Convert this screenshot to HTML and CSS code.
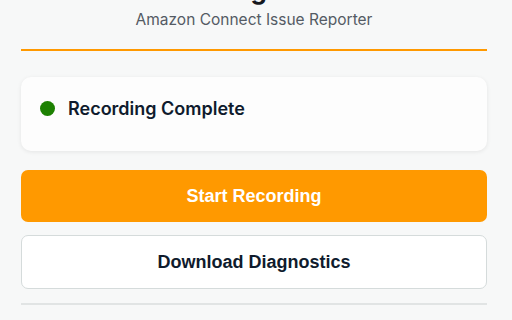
FILE: index.html
```html
<!DOCTYPE html>
<html lang="en">
  <head>
    <meta charset="UTF-8" />
    <meta name="viewport" content="width=device-width, initial-scale=1.0" />
    <title>CCP Diagnostics</title>
    <link rel="stylesheet" href="styles.css">
  </head>
  <body>
    <header>
      <h1>CCP Diagnostics</h1>
      <div class="subtitle">Amazon Connect Issue Reporter</div>
    </header>

    <main>
      <div class="status-card">
        <div class="status">
          <span class="status-dot"></span>
          <span class="status-text">Recording Complete</span>
        </div>
      </div>

      <button class="btn btn-primary">Start Recording</button>
      <button class="btn btn-secondary">Download Diagnostics</button>

      <div class="divider"></div>
    </main>
  </body>
</html>
```

FILE: styles.css
```css
* {
  margin: 0;
  padding: 0;
  box-sizing: border-box;
}
body {
  background-color: #f7f8f8;
  color: #0f1b2d;
  font-family: Inter, "Noto Sans", sans-serif;
  padding: 0 25px 0 21px;
}
header {
  text-align: center;
  margin-top: -25px;
  padding-bottom: 19px;
  border-bottom: 2px solid #ff9900;
}
h1 {
  font-size: 26px;
  line-height: 30px;
  font-weight: 700;
  color: #16191f;
}
.subtitle {
  margin-top: 5px;
  font-size: 15.5px;
  line-height: 20px;
  color: #545b64;
}
.status-card {
  margin-top: 26px;
  background: #fdfdfd;
  border-radius: 10px;
  padding: 20px 19px 32px;
  box-shadow: 0 1px 4px rgba(0, 0, 0, 0.08);
}
.status {
  display: flex;
  align-items: center;
  gap: 13px;
  height: 22px;
}
.status-dot {
  width: 15px;
  height: 15px;
  border-radius: 50%;
  background-color: #1d8102;
}
.status-text {
  font-size: 18px;
  font-weight: 600;
}
.btn {
  display: block;
  width: 100%;
  border-radius: 7px;
  font-family: "Liberation Sans", Arial, sans-serif;
  font-size: 18px;
  font-weight: bold;
  cursor: pointer;
}
.btn-primary {
  margin-top: 19px;
  height: 52px;
  background-color: #ff9900;
  color: white;
  border: none;
}
.btn-secondary {
  margin-top: 13px;
  height: 54px;
  background-color: #fff;
  color: #0f1b2d;
  border: 1px solid #d5dbdb;
}
.divider {
  margin-top: 14px;
  border-top: 2px solid #e1e4e4;
}
```
